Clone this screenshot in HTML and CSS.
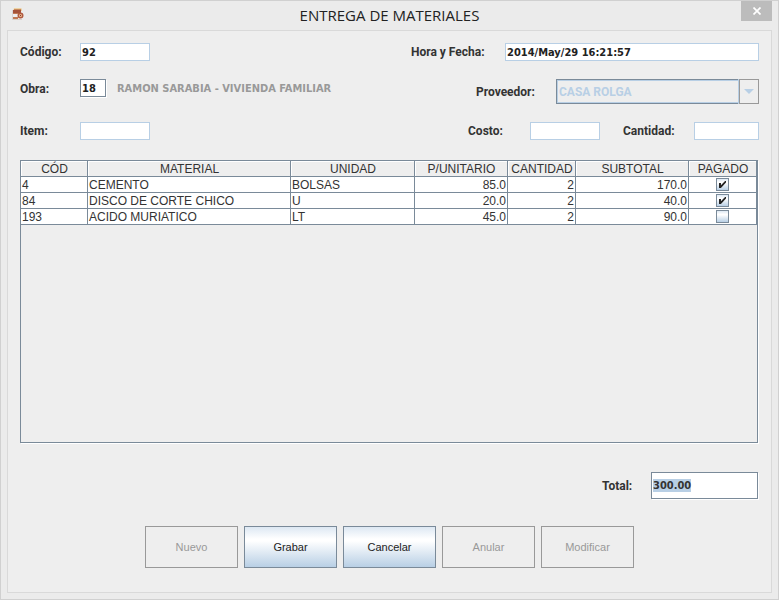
FILE: index.html
```html
<!DOCTYPE html>
<html lang="es">
<head>
<meta charset="utf-8">
<title>ENTREGA DE MATERIALES</title>
<link rel="stylesheet" href="styles.css">
</head>
<body>
<main class="window">
  <header class="titlebar">
    <svg class="app-icon" viewBox="0 0 12 13" aria-hidden="true">
      <path d="M0 2H2V12H0Z" fill="#d8d4d6"/>
      <path d="M2 0H9L10 1V3H1Z" fill="#ecd2a4"/>
      <path d="M2 1H9V2H2Z" fill="#c98a5c"/>
      <path d="M1 2H9V5H1Z" fill="#a5523a"/>
      <path d="M1 5H6V9H1Z" fill="#f0ecee"/>
      <path d="M1 5H7V6H1ZM1 9H6V11H1Z" fill="#c07a55"/>
      <path d="M1 11H10V12H1Z" fill="#d9cfc8"/>
      <circle cx="8.500" cy="7.500" r="2.300" fill="#e6b48c" stroke="#b05a40" stroke-width="1.400"/>
      <path d="M8 7H9V8H8Z" fill="#8b3a2c"/>
    </svg>
    <h1 class="title">ENTREGA DE MATERIALES</h1>
    <button class="close" type="button" aria-label="Cerrar">
      <svg viewBox="0 0 8 8" width="8" height="8" aria-hidden="true"><path d="M0.500 0.500L7.500 7.500M7.500 0.500L0.500 7.500" stroke="#fff" stroke-width="1.700"/></svg>
    </button>
  </header>

  <form class="panel">
    <div class="row">
      <div class="group">
        <label class="label label-left" for="codigo">Código:</label>
        <input class="field field-short" id="codigo" type="text" value="92">
      </div>
      <div class="group">
        <label class="label label-date" for="fecha">Hora y Fecha:</label>
        <input class="field field-date" id="fecha" type="text" value="2014/May/29 16:21:57">
      </div>
    </div>

    <div class="row">
      <div class="group group-work">
        <label class="label label-left" for="obra">Obra:</label>
        <input class="field field-etched field-work" id="obra" type="text" value="18">
        <output class="work-name" for="obra">RAMON SARABIA - VIVIENDA FAMILIAR</output>
      </div>
      <div class="group">
        <label class="label label-vendor" for="proveedor">Proveedor:</label>
        <div class="combo">
          <select class="combo-select" id="proveedor" disabled>
            <option>CASA ROLGA</option>
          </select>
          <span class="combo-arrow"></span>
        </div>
      </div>
    </div>

    <div class="row">
      <div class="group">
        <label class="label label-left" for="item">Item:</label>
        <input class="field field-short" id="item" type="text">
      </div>
      <div class="group">
        <label class="label label-cost" for="costo">Costo:</label>
        <input class="field field-short" id="costo" type="text">
        <label class="label label-quantity" for="cantidad">Cantidad:</label>
        <input class="field field-quantity" id="cantidad" type="text">
      </div>
    </div>

    <div class="grid-pane">
      <table class="grid">
        <colgroup>
          <col class="col-code"><col class="col-material"><col class="col-unit"><col class="col-price"><col class="col-quantity"><col class="col-subtotal"><col class="col-paid">
        </colgroup>
        <thead>
          <tr><th>CÓD</th><th>MATERIAL</th><th>UNIDAD</th><th>P/UNITARIO</th><th>CANTIDAD</th><th>SUBTOTAL</th><th>PAGADO</th></tr>
        </thead>
        <tbody>
          <tr><td>4</td><td>CEMENTO</td><td>BOLSAS</td><td class="num">85.0</td><td class="num">2</td><td class="num">170.0</td><td class="paid"><input class="check" type="checkbox" aria-label="Pagado CEMENTO" checked></td></tr>
          <tr><td>84</td><td>DISCO DE CORTE CHICO</td><td>U</td><td class="num">20.0</td><td class="num">2</td><td class="num">40.0</td><td class="paid"><input class="check" type="checkbox" aria-label="Pagado DISCO DE CORTE CHICO" checked></td></tr>
          <tr><td>193</td><td>ACIDO MURIATICO</td><td>LT</td><td class="num">45.0</td><td class="num">2</td><td class="num">90.0</td><td class="paid"><input class="check" type="checkbox" aria-label="Pagado ACIDO MURIATICO"></td></tr>
        </tbody>
      </table>
    </div>

    <div class="total">
      <label class="label label-total" for="total">Total:</label>
      <input class="field field-etched field-total" id="total" type="text" value="300.00">
    </div>

    <div class="actions">
      <button class="button" type="button" disabled>Nuevo</button>
      <button class="button" type="button">Grabar</button>
      <button class="button" type="button">Cancelar</button>
      <button class="button" type="button" disabled>Anular</button>
      <button class="button" type="button" disabled>Modificar</button>
    </div>
  </form>
</main>
<script src="script.js"></script>
</body>
</html>
```
FILE: styles.css
```css
:root {
  --line: #7a8a99;
  --blue: #b8cfe5;
  --surface: #eee;
  --text: #333;
  --muted: #999;
  --metal: linear-gradient(#dde8f3 0%, #fff 30%, #fff 35%, #b8cfe5 100%);
}

* {
  box-sizing: border-box;
}

body {
  margin: 0;
  color: var(--text);
  font-family: "Liberation Sans", Arial, sans-serif;
  font-size: 12px;
}

.window {
  display: flex;
  flex-direction: column;
  min-height: 100vh;
  padding: 0 6px 6px;
  border: 1px solid #d0d0d0;
  background: #ebebeb;
}

.titlebar {
  display: grid;
  grid-template-columns: 31px 1fr 31px;
  height: 29px;
}

.app-icon {
  width: 12px;
  height: 13px;
  margin: 7px 0 0 5px;
}

.title {
  margin: 0;
  color: #222;
  font: 400 15px/28px "Open Sans", "Segoe UI", sans-serif;
  text-align: center;
}

.close {
  display: flex;
  align-items: center;
  justify-content: center;
  width: 31px;
  height: 20px;
  padding: 0;
  border: 0;
  background: #bcbcbc;
}

.panel {
  display: flex;
  flex: 1;
  flex-direction: column;
  padding: 12px 12px 24px;
  border: 1px solid #d9d9d9;
  background: var(--surface);
}

.row {
  display: flex;
  justify-content: space-between;
  margin-bottom: 18px;
}

.group {
  display: flex;
  align-items: center;
}

.label,
.work-name {
  line-height: 18px;
}

.label {
  font-family: Roboto, Arial, sans-serif;
  font-size: 12px;
  font-weight: 700;
}

.group-work {
  align-items: flex-start;
  align-self: flex-start;
}

.group-work .label,
.group-work .work-name {
  line-height: 20px;
}

.label-left { width: 60px; }
.label-date { width: 94px; }
.label-vendor { width: 80px; }
.label-cost { width: 62px; }
.label-quantity { width: 71px; margin-left: 23px; }
.label-total { width: 49px; }

.field {
  height: 18px;
  padding: 0 1px;
  border: 1px solid var(--blue);
  outline: 0;
  background: #fff;
  color: #222;
  font: 700 11px "DejaVu Sans Condensed", Tahoma, sans-serif;
}

.field-short { width: 70px; }
.field-date { width: 254px; }
.field-quantity { width: 65px; }

.field-etched {
  border-color: var(--line);
  box-shadow: 1px 1px #fff;
}

.field-work { width: 26px; }

.field-total {
  width: 107px;
  height: 27px;
  caret-color: transparent;
}

.field::selection {
  background: var(--blue);
  color: var(--text);
}

.work-name {
  margin-left: 11px;
  color: var(--muted);
  font-family: "DejaVu Sans Condensed", Tahoma, sans-serif;
  font-size: 11px;
  font-weight: 700;
}

.combo {
  position: relative;
  width: 203px;
  height: 25px;
}

.combo-select {
  width: 100%;
  height: 100%;
  padding: 0 22px 0 2px;
  border: 1px solid var(--line);
  border-radius: 0;
  appearance: none;
  background: var(--surface);
  box-shadow: inset 0 0 0 1px var(--blue);
  color: var(--blue);
  font: 700 12px Roboto, Arial, sans-serif;
  opacity: 1;
}

.combo-arrow {
  position: absolute;
  inset: 0 0 0 auto;
  display: flex;
  align-items: center;
  justify-content: center;
  width: 20px;
  border: 1px solid var(--muted);
  background: var(--surface);
  box-shadow: -1px 0 var(--blue);
  pointer-events: none;
}

.combo-arrow::before {
  border: 5px solid transparent;
  border-top-color: var(--blue);
  border-bottom: 0;
  content: "";
}

.grid-pane {
  flex: 1;
  margin: 2px 1px 29px 0;
  border: 1px solid var(--line);
  box-shadow: 1px 1px #fff;
}

.grid {
  width: 100%;
  border-collapse: separate;
  border-spacing: 0;
  table-layout: fixed;
}

.col-code { width: 67px; }
.col-unit { width: 124px; }
.col-price { width: 93px; }
.col-quantity { width: 68px; }
.col-subtotal { width: 113px; }
.col-paid { width: 68px; }

.grid th,
.grid td {
  height: 16px;
  padding: 1px 1px 0;
  overflow: hidden;
  border: solid var(--line);
  border-width: 0 1px 1px 0;
  font-weight: 400;
  line-height: 14px;
  text-align: left;
  white-space: nowrap;
}

.grid th {
  padding: 2px 0 0 1px;
  box-shadow: inset 1px 1px #fff;
  line-height: 13px;
  text-align: center;
}

.grid td {
  background: #fff;
}

.grid .num {
  text-align: right;
}

.grid .paid {
  padding: 0;
  text-align: center;
}

.check {
  display: block;
  width: 13px;
  height: 13px;
  margin: 0 auto;
  border: 1px solid var(--line);
  appearance: none;
  background: var(--metal);
}

.check:checked::before {
  display: block;
  width: 7px;
  height: 7px;
  margin: 2px;
  background: #222;
  clip-path: polygon(0 28%, 28% 28%, 28% 62%, 86% 0, 100% 0, 100% 22%, 28% 100%, 0 100%);
  content: "";
}

.total {
  display: flex;
  align-items: center;
  justify-content: flex-end;
  margin: 0 1px 27px 0;
}

.actions {
  display: flex;
  gap: 6px;
  justify-content: center;
}

.button {
  width: 93px;
  height: 42px;
  padding: 0;
  border: 1px solid var(--line);
  background: var(--metal);
  color: #222;
  font: 11px "Liberation Sans", Arial, sans-serif;
}

.button:disabled {
  border-color: var(--muted);
  background: var(--surface);
  color: var(--muted);
}
```
FILE: script.js
```js
const total = document.getElementById("total");
total.focus();
total.select();
```
